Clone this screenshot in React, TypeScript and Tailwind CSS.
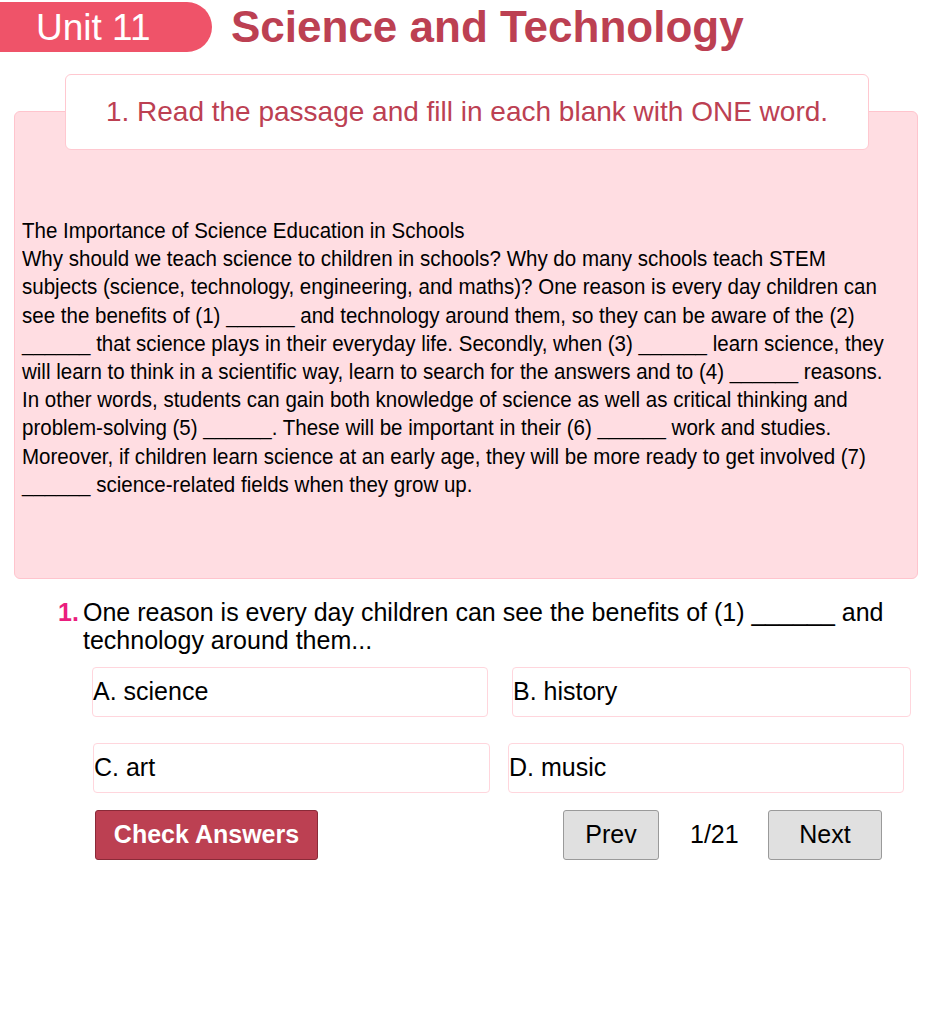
import React from 'react'

// passage lines broken where the reference breaks them
const PASSAGE = [
  'The Importance of Science Education in Schools',
  'Why should we teach science to children in schools? Why do many schools teach STEM',
  'subjects (science, technology, engineering, and maths)? One reason is every day children can',
  'see the benefits of (1) ______ and technology around them, so they can be aware of the (2)',
  '______ that science plays in their everyday life. Secondly, when (3) ______ learn science, they',
  'will learn to think in a scientific way, learn to search for the answers and to (4) ______ reasons.',
  'In other words, students can gain both knowledge of science as well as critical thinking and',
  'problem-solving (5) ______. These will be important in their (6) ______ work and studies.',
  'Moreover, if children learn science at an early age, they will be more ready to get involved (7)',
  '______ science-related fields when they grow up.',
]

function Option({ label, className }: { label: string; className: string }) {
  return (
    <div
      className={`flex h-[50px] items-center rounded-[4px] border border-[#ffd6dd] bg-white text-[25px] text-black ${className}`}
    >
      {label}
    </div>
  )
}

export default function App() {
  return (
    <div className="min-h-[1029px] w-[940px] bg-white font-['Liberation_Sans',Arial,sans-serif]">
      {/* header */}
      <div className="flex items-center pt-[2px]">
        <div className="flex h-[50px] w-[212px] items-center rounded-r-full bg-[#ef5369] pl-[36px] text-[37px] leading-none text-white">
          Unit 11
        </div>
        <h1 className="ml-[19px] text-[44px] font-bold leading-none text-[#bc4052]">
          Science and Technology
        </h1>
      </div>

      {/* instruction + passage */}
      <div className="relative z-10 ml-[65px] mt-[22px] flex h-[76px] w-[804px] items-center justify-center rounded-[6px] border border-[#ffc8d0] bg-white text-[28px] text-[#bc4052]">
        1. Read the passage and fill in each blank with ONE word.
      </div>
      <div className="ml-[14px] -mt-[39px] h-[468px] w-[904px] overflow-hidden rounded-[6px] border border-[#ffc4cd] bg-[#ffdde2] pl-[7px] pt-[105px] text-[22.6px] leading-[28.2px] text-black">
        {PASSAGE.map((p, i) => (
          <div key={i} className="origin-left scale-x-[0.908] whitespace-nowrap">
            {p}
          </div>
        ))}
      </div>

      {/* question */}
      <div className="ml-[58px] mt-[19px] flex pr-[50px] text-[25px] leading-[28px] text-black">
        <span className="w-[25px] shrink-0 font-bold text-[#ea1e7e]">1.</span>
        <span>
          One reason is every day children can see the benefits of (1) ______ and technology around them...
        </span>
      </div>

      <div className="mt-[13px] flex">
        <Option label="A. science" className="ml-[92px] w-[396px]" />
        <Option label="B. history" className="ml-[24px] w-[399px]" />
      </div>
      <div className="mt-[26px] flex">
        <Option label="C. art" className="ml-[93px] w-[397px]" />
        <Option label="D. music" className="ml-[18px] w-[396px]" />
      </div>

      <div className="mt-[17px] flex items-center">
        <button className="ml-[95px] h-[50px] w-[223px] rounded-[3px] border border-[#8a2a38] bg-[#bc4052] text-[25px] font-bold text-white">
          Check Answers
        </button>
        <button className="ml-[245px] h-[50px] w-[96px] rounded-[3px] border border-[#9a9a9a] bg-[#e0e0e0] text-[25px] text-black">
          Prev
        </button>
        <span className="ml-[31px] w-[51px] text-[25px] text-black">1/21</span>
        <button className="ml-[27px] h-[50px] w-[114px] rounded-[3px] border border-[#9a9a9a] bg-[#e0e0e0] text-[25px] text-black">
          Next
        </button>
      </div>
    </div>
  )
}
